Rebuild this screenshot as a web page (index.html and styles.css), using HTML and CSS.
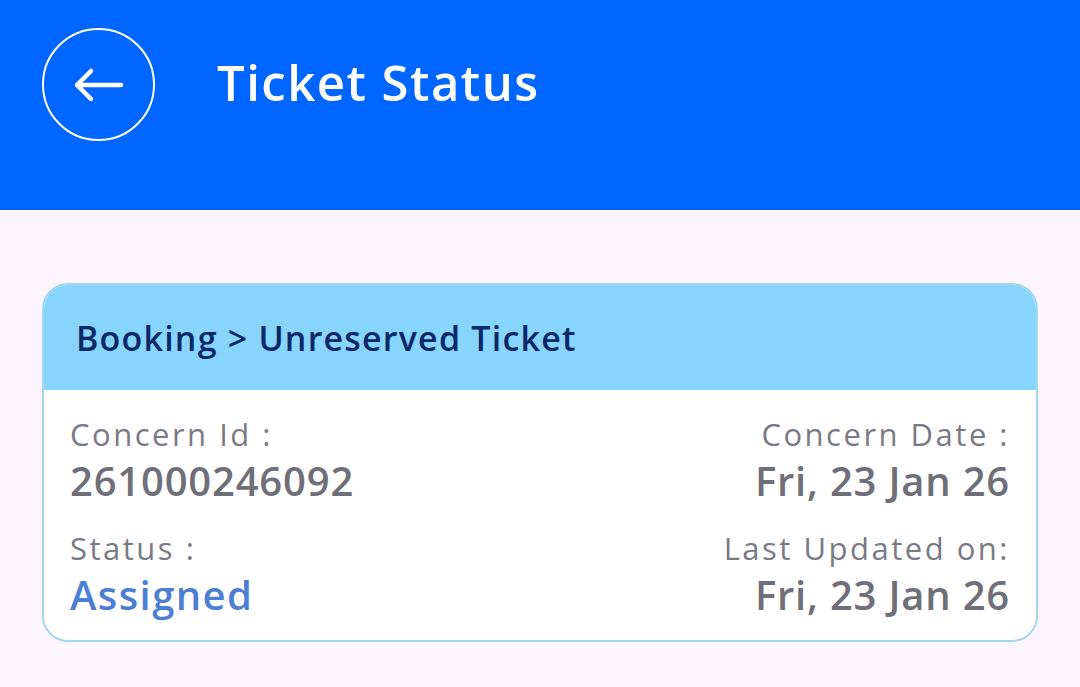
FILE: index.html
```html
<!DOCTYPE html>
<html lang="en">
<head>
<meta charset="utf-8">
<title>Ticket Status</title>
<link rel="stylesheet" href="styles.css">
</head>
<body>
<header class="appbar">
  <button class="back" aria-label="Back">
    <svg width="52" height="36" viewBox="0 0 52 36" fill="none" stroke="#fff" stroke-width="4.5" stroke-linecap="round" stroke-linejoin="round">
      <path d="M48 18H4M18 4L4 18L18 32"/>
    </svg>
  </button>
  <h1 class="title">Ticket Status</h1>
</header>
<main class="content">
  <section class="card">
    <div class="card-head">Booking &gt; Unreserved Ticket</div>
    <div class="card-body">
      <div class="row">
        <div class="cell">
          <div class="label">Concern Id :</div>
          <div class="value">261000246092</div>
        </div>
        <div class="cell right">
          <div class="label">Concern Date :</div>
          <div class="value">Fri, 23 Jan 26</div>
        </div>
      </div>
      <div class="row">
        <div class="cell">
          <div class="label">Status :</div>
          <div class="value status">Assigned</div>
        </div>
        <div class="cell right">
          <div class="label">Last Updated on:</div>
          <div class="value">Fri, 23 Jan 26</div>
        </div>
      </div>
    </div>
  </section>
</main>
</body>
</html>
```
FILE: styles.css
```css
* { box-sizing: border-box; }
html, body { margin: 0; padding: 0; }
body {
  background: #fcf5ff;
  font-family: "Open Sans", "Noto Sans", sans-serif;
  width: 1080px;
  height: 687px;
  overflow: hidden;
}
.appbar {
  background: #0066ff;
  height: 210px;
  display: flex;
  align-items: flex-start;
  padding: 28px 0 0 42px;
}
.back {
  width: 113px;
  height: 113px;
  border-radius: 50%;
  border: 2.5px solid #fff;
  background: transparent;
  display: flex;
  align-items: center;
  justify-content: center;
  padding: 0 0 0 0;
  margin: 0;
}
.title {
  margin: -2px 0 0 62px;
  color: #fff;
  font-size: 49px;
  font-weight: 600;
  line-height: 113px;
  letter-spacing: 1.5px;
}
.content {
  padding: 73px 42px 0 42px;
}
.card {
  border: 2px solid #a3d6ea;
  border-radius: 26px;
  overflow: hidden;
  background: #fff;
}
.card-head {
  background: #87d4fd;
  height: 105px;
  padding: 0 0 0 32px;
  display: flex;
  align-items: center;
  color: #0a2868;
  font-size: 34px;
  font-weight: 600;
  letter-spacing: 1.2px;
}
.card-body {
  padding: 24px 26px 21px 26px;
  display: flex;
  flex-direction: column;
  gap: 23px;
}
.row {
  display: flex;
  justify-content: space-between;
}
.cell.right { text-align: right; }
.label {
  color: #7a7a84;
  font-size: 31px;
  line-height: 40px;
  letter-spacing: 2.5px;
}
.value {
  margin-top: 3px;
  color: #6f6f7a;
  font-size: 40px;
  font-weight: 600;
  line-height: 48px;
  letter-spacing: 0.8px;
}
.value.status { color: #4c7fd4; letter-spacing: 1.4px; }
```
